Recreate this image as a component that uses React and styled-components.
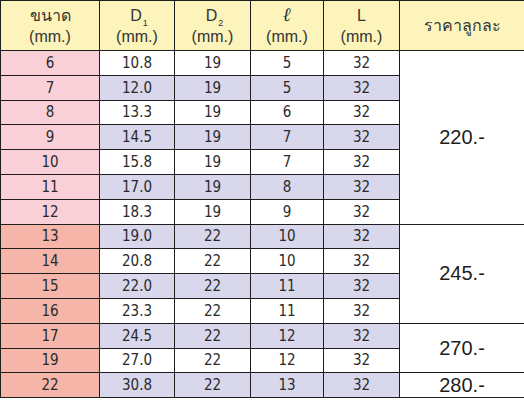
import React from "react";
import styled, { createGlobalStyle } from "styled-components";

const rows = [
  ["6", "10.8", "19", "5", "32"],
  ["7", "12.0", "19", "5", "32"],
  ["8", "13.3", "19", "6", "32"],
  ["9", "14.5", "19", "7", "32"],
  ["10", "15.8", "19", "7", "32"],
  ["11", "17.0", "19", "8", "32"],
  ["12", "18.3", "19", "9", "32"],
  ["13", "19.0", "22", "10", "32"],
  ["14", "20.8", "22", "10", "32"],
  ["15", "22.0", "22", "11", "32"],
  ["16", "23.3", "22", "11", "32"],
  ["17", "24.5", "22", "12", "32"],
  ["19", "27.0", "22", "12", "32"],
  ["22", "30.8", "22", "13", "32"],
];

// price cell starts at row index -> [label, rowspan]
const prices = {
  0: ["220.-", 7],
  7: ["245.-", 4],
  11: ["270.-", 2],
  13: ["280.-", 1],
};

export default function App() {
  return (
    <>
      <Global />
      <Table>
        <colgroup>
          <col style={{ width: 99 }} />
          <col style={{ width: 75 }} />
          <col style={{ width: 76 }} />
          <col style={{ width: 73 }} />
          <col style={{ width: 76 }} />
          <col style={{ width: 125 }} />
        </colgroup>
        <thead>
          <tr>
            <Head>
              ขนาด
              <br />
              (mm.)
            </Head>
            <Head>
              D<Sub>1</Sub>
              <br />
              (mm.)
            </Head>
            <Head>
              D<Sub>2</Sub>
              <br />
              (mm.)
            </Head>
            <Head>
              <Ell>ℓ</Ell>
              <br />
              (mm.)
            </Head>
            <Head>
              L
              <br />
              (mm.)
            </Head>
            <Head>ราคาลูกละ</Head>
          </tr>
        </thead>
        <tbody>
          {rows.map((r, i) => (
            <Row key={r[0]}>
              <Size $large={i >= 7}>{r[0]}</Size>
              {r.slice(1).map((v, j) => (
                <Cell key={j} $striped={i % 2 === 1}>
                  {v}
                </Cell>
              ))}
              {prices[i] && (
                <Price rowSpan={prices[i][1]}>{prices[i][0]}</Price>
              )}
            </Row>
          ))}
        </tbody>
      </Table>
    </>
  );
}

const Global = createGlobalStyle`
  body {
    margin: 0;
    background: #ffffff;
  }
`;

const Table = styled.table`
  width: 524px;
  table-layout: fixed;
  border-collapse: collapse;
  border: 1px solid #1e1e1e;
  color: #2a2a2a;

  td,
  th {
    border: 1px solid #1e1e1e;
    padding: 0;
    text-align: center;
  }
`;

const Head = styled.th`
  height: 49px;
  background: #fcf4bb;
  font-family: "Liberation Sans", Arial, sans-serif;
  font-weight: normal;
  font-size: 16px;
  line-height: 21px;
  color: #333333;
`;

const Sub = styled.span`
  display: inline-block;
  font-size: 9px;
  line-height: 0;
  vertical-align: -5px;
  margin-left: 1px;
  margin-right: -4px;
`;

const Ell = styled.span`
  font-family: "Liberation Serif", serif;
  font-style: italic;
  font-weight: bold;
  font-size: 19px;
`;

const Row = styled.tr`
  height: 24.8px;
`;

const Size = styled.td`
  background: ${(p) => (p.$large ? "#f5b6a9" : "#f9d0d8")};
  font-family: "DejaVu Sans Condensed", "DejaVu Sans", sans-serif;
  font-size: 15px;
`;

const Cell = styled.td`
  background: ${(p) => (p.$striped ? "#d8d7ec" : "#ffffff")};
  font-family: "DejaVu Sans Condensed", "DejaVu Sans", sans-serif;
  font-size: 15px;
`;

const Price = styled.td`
  background: #ffffff;
  font-family: "Liberation Sans", Arial, sans-serif;
  font-size: 20px;
  color: #1e1e1e;
`;
